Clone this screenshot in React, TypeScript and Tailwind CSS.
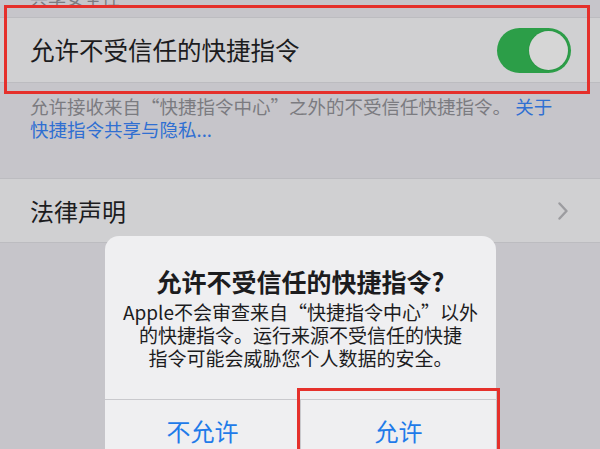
const font = "font-['Noto_Sans_CJK_SC','Noto_Sans',sans-serif]";

const Toggle = () => (
  <div className="flex h-[45px] w-[74px] items-center justify-end rounded-full bg-[#2c9e48] pr-[3px]">
    <div className="h-[39px] w-[39px] rounded-full bg-[#d6d6d6] shadow-[0_0_0_1px_rgba(0,0,0,0.04)]" />
  </div>
);

const Chevron = () => (
  <svg width="10" height="18" viewBox="0 0 10 18" fill="none">
    <path d="M1.5 1.5 L8.5 9 L1.5 16.5" stroke="#9c9ca0" strokeWidth="2.4" strokeLinecap="round" strokeLinejoin="round" />
  </svg>
);

export default function App() {
  return (
    <div className={`relative h-[449px] w-[600px] overflow-hidden bg-[#c6c5ca] ${font}`}>
      {/* section header, scrolled almost out of view */}
      <div className="h-[17px] overflow-hidden px-[30px]">
        <div className="-mt-[12px] text-[18px] leading-[18px] text-[#7b7b80]">共享安全性</div>
      </div>

      {/* trusted shortcuts row */}
      <div className="flex h-[66px] items-center justify-between border-y border-[#bcbcc0] bg-[#d0d0d2] pl-[30px] pr-[29px]">
        <span className="text-[24.5px] text-[#1c1c1e]">允许不受信任的快捷指令</span>
        <Toggle />
      </div>

      {/* footer note */}
      <div className="px-[30px] pt-[12px] text-[18.5px] leading-[23px] text-[#7b7b80]">
        允许接收来自“快捷指令中心”之外的不受信任快捷指令。 <span className="text-[#2f6fd2]">关于</span>
        <br />
        <span className="text-[#2f6fd2]">快捷指令共享与隐私...</span>
      </div>

      {/* legal row */}
      <div className="mt-[37px] flex h-[65px] items-center justify-between border-y border-[#bcbcc0] bg-[#d0d0d2] pl-[30px] pr-[32px]">
        <span className="text-[24px] text-[#1c1c1e]">法律声明</span>
        <Chevron />
      </div>

      {/* alert */}
      <div className="absolute left-[105px] top-[236px] h-[240px] w-[391px] rounded-[14px] bg-[#efeff1]">
        <div className="pt-[30px] text-center text-[25px] font-semibold leading-[30px] text-[#1c1c1e]">
          允许不受信任的快捷指令?
        </div>
        <div className="mt-[4px] text-center text-[19px] leading-[23px] text-[#1c1c1e]">
          Apple不会审查来自“快捷指令中心”以外
          <br />
          的快捷指令。运行来源不受信任的快捷
          <br />
          指令可能会威胁您个人数据的安全。
        </div>
        <div className="mt-[30px] flex h-[62px] border-t border-[#c9c9cd]">
          <div className="flex flex-1 items-center justify-center text-[24px] text-[#1f7be9]">不允许</div>
          <div className="flex flex-1 items-center justify-center border-l border-[#c9c9cd] text-[24px] text-[#1f7be9]">
            允许
          </div>
        </div>
      </div>

      {/* annotation boxes */}
      <div className="absolute left-[4px] top-[5px] h-[89px] w-[586px] border-[3px] border-[#e5302b]" />
      <div className="absolute left-[297px] top-[388px] h-[80px] w-[203px] border-[3px] border-[#e5302b]" />
    </div>
  );
}
